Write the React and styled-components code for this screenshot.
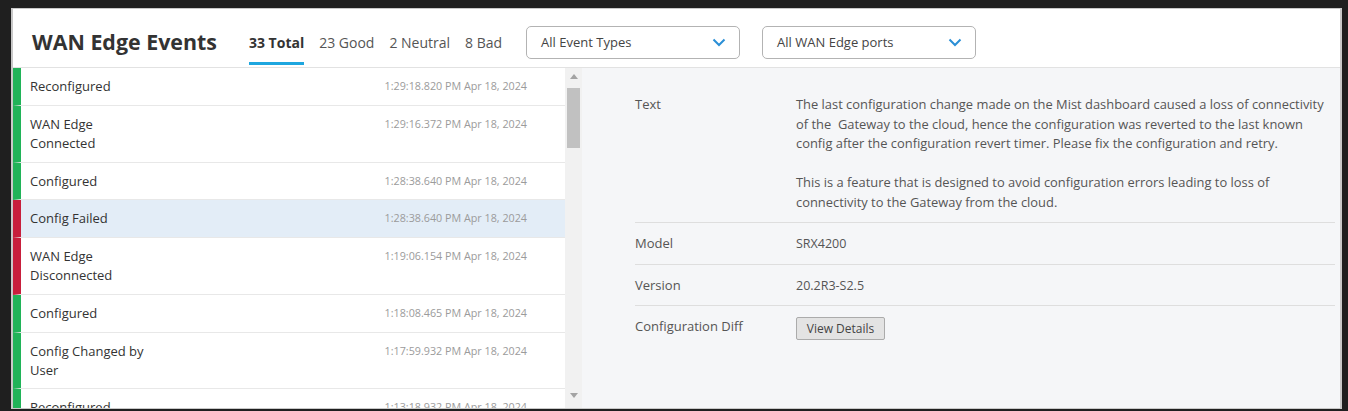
import styled, { createGlobalStyle } from "styled-components";

const GlobalStyle = createGlobalStyle`
    body {
        margin: 0;
        background: #1f1f1f;
        font-family: "Open Sans", "Noto Sans", sans-serif;
    }
`

const events = [
    { name: 'Reconfigured', time: '1:29:18.820 PM Apr 18, 2024', status: 'good' },
    { name: 'WAN Edge Connected', time: '1:29:16.372 PM Apr 18, 2024', status: 'good' },
    { name: 'Configured', time: '1:28:38.640 PM Apr 18, 2024', status: 'good' },
    { name: 'Config Failed', time: '1:28:38.640 PM Apr 18, 2024', status: 'bad', selected: true },
    { name: 'WAN Edge Disconnected', time: '1:19:06.154 PM Apr 18, 2024', status: 'bad' },
    { name: 'Configured', time: '1:18:08.465 PM Apr 18, 2024', status: 'good' },
    { name: 'Config Changed by User', time: '1:17:59.932 PM Apr 18, 2024', status: 'good' },
    { name: 'Reconfigured', time: '1:13:18.932 PM Apr 18, 2024', status: 'good' },
]

const Chevron = () => (
    <svg width="14" height="9" viewBox="0 0 14 9">
        <polyline points="1.5,1.5 7,7 12.5,1.5" fill="none" stroke="#2b8fd6" strokeWidth="2" />
    </svg>
)

const Arrow = ({ down }) => (
    <svg width="8" height="5" viewBox="0 0 8 5">
        <polygon points={down ? '0,0 8,0 4,5' : '0,5 8,5 4,0'} fill="#a3a3a3" />
    </svg>
)

const App = () => {

    return (
        <Frame>
            <GlobalStyle />
            <Panel>
                <Header>
                    <Title>WAN Edge Events</Title>
                    <Tabs>
                        <Tab active>33 Total</Tab>
                        <Tab>23 Good</Tab>
                        <Tab>2 Neutral</Tab>
                        <Tab>8 Bad</Tab>
                    </Tabs>
                    <Filters>
                        <Select>All Event Types<Chevron /></Select>
                        <Select>All WAN Edge ports<Chevron /></Select>
                    </Filters>
                </Header>
                <Body>
                    <List>
                        {events.map((ev, i) => (
                            <Row key={i} status={ev.status} selected={ev.selected}>
                                <EventName>{ev.name}</EventName>
                                <EventTime>{ev.time}</EventTime>
                            </Row>
                        ))}
                    </List>
                    <ScrollBar>
                        <ScrollArrow><Arrow /></ScrollArrow>
                        <Thumb />
                        <ScrollSpace />
                        <ScrollArrow bottom><Arrow down /></ScrollArrow>
                    </ScrollBar>
                    <Details>
                        <DetailRow>
                            <Label>Text</Label>
                            <Value wide>
                                <p>The last configuration change made on the Mist dashboard caused a loss of connectivity of the &nbsp;Gateway to the cloud, hence the configuration was reverted to the last known config after the configuration revert timer. Please fix the configuration and retry.</p>
                                <p>This is a feature that is designed to avoid configuration errors leading to loss of connectivity to the Gateway from the cloud.</p>
                            </Value>
                        </DetailRow>
                        <DetailRow>
                            <Label>Model</Label>
                            <Value>SRX4200</Value>
                        </DetailRow>
                        <DetailRow>
                            <Label>Version</Label>
                            <Value>20.2R3-S2.5</Value>
                        </DetailRow>
                        <DetailRow last>
                            <Label>Configuration Diff</Label>
                            <Value><DetailsButton>View Details</DetailsButton></Value>
                        </DetailRow>
                    </Details>
                </Body>
            </Panel>
        </Frame>
    )
}

const Frame = styled.div`
    box-sizing: border-box;
    height: 411px;
    padding: 8px 6px 2px 11px;
`
const Panel = styled.div`
    box-sizing: border-box;
    height: 100%;
    display: flex;
    flex-direction: column;
    background: #fff;
    border: 1px solid #c8c8c8;
    border-right-width: 2px;
    border-left-width: 2px;
    overflow: hidden;
`
const Header = styled.div`
    box-sizing: border-box;
    flex: none;
    height: 59px;
    padding: 8px 0 0 19px;
    display: flex;
    align-items: center;
    border-bottom: 1px solid #e2e2e2;
`
const Title = styled.h1`
    margin: 0 32px 0 0;
    font-size: 21.4px;
    font-weight: 700;
    color: #333;
    line-height: 30px;
`
const Tabs = styled.div`
    display: flex;
    gap: 15px;
`
const Tab = styled.span`
    position: relative;
    font-size: 14px;
    line-height: 19px;
    font-weight: ${p => p.active ? 700 : 400};
    color: ${p => p.active ? '#333' : '#555'};
    &::after {
        content: '';
        display: ${p => p.active ? 'block' : 'none'};
        position: absolute;
        left: 0;
        right: 0;
        top: calc(100% + 10px);
        height: 3px;
        background: #1ea6df;
    }
`
const Filters = styled.div`
    display: flex;
    gap: 22px;
    margin-left: 24px;
`
const Select = styled.div`
    box-sizing: border-box;
    width: 214px;
    height: 33px;
    padding: 0 13px 0 14px;
    display: flex;
    align-items: center;
    justify-content: space-between;
    border: 1px solid #b3b3b3;
    border-radius: 5px;
    font-size: 13px;
    color: #444;
`
const Body = styled.div`
    flex: 1;
    min-height: 0;
    display: flex;
`
const List = styled.div`
    width: 552px;
    flex: none;
    overflow: hidden;
`
const Row = styled.div`
    display: flex;
    align-items: flex-start;
    padding: 9px 38px 8.75px 9px;
    border-left: 8px solid ${p => p.status === 'bad' ? '#c81f3c' : '#20b358'};
    border-bottom: 1px solid #e8e8e8;
    background: ${p => p.selected ? '#e3edf7' : '#fff'};
`
const EventName = styled.div`
    width: 122px;
    font-size: 13px;
    line-height: 19px;
    color: #333;
`
const EventTime = styled.div`
    margin-left: auto;
    font-size: 10.75px;
    line-height: 19px;
    color: #9b9b9b;
`
const ScrollBar = styled.div`
    width: 17px;
    flex: none;
    display: flex;
    flex-direction: column;
    align-items: center;
    background: #f1f1f1;
`
const ScrollArrow = styled.div`
    height: 17px;
    margin-bottom: ${p => p.bottom ? '4px' : '0'};
    display: flex;
    align-items: center;
    justify-content: center;
`
const Thumb = styled.div`
    width: 13px;
    height: 60px;
    margin-top: 3px;
    background: #c1c1c1;
`
const ScrollSpace = styled.div`
    flex: 1;
`
const Details = styled.div`
    flex: 1;
    background: #f5f6f8;
    padding: 16px 5px 0 53px;
`
const DetailRow = styled.div`
    display: grid;
    grid-template-columns: 161px 1fr;
    align-items: start;
    padding: 11px 0 10px;
    border-bottom: ${p => p.last ? 'none' : '1px solid #dedede'};
`
const Label = styled.div`
    font-size: 13px;
    line-height: 19.5px;
    color: #555;
`
const Value = styled.div`
    font-size: ${p => p.wide ? '12.9px' : '12.5px'};
    line-height: 19.5px;
    color: #555;
    p {
        margin: 0;
    }
    p + p {
        margin-top: 19.5px;
    }
`
const DetailsButton = styled.button`
    box-sizing: border-box;
    height: 23px;
    width: 89px;
    padding: 0;
    font-family: inherit;
    font-size: 12px;
    color: #444;
    background: #e3e3e3;
    border: 1px solid #ababab;
    border-radius: 2px;
`

export default App;
